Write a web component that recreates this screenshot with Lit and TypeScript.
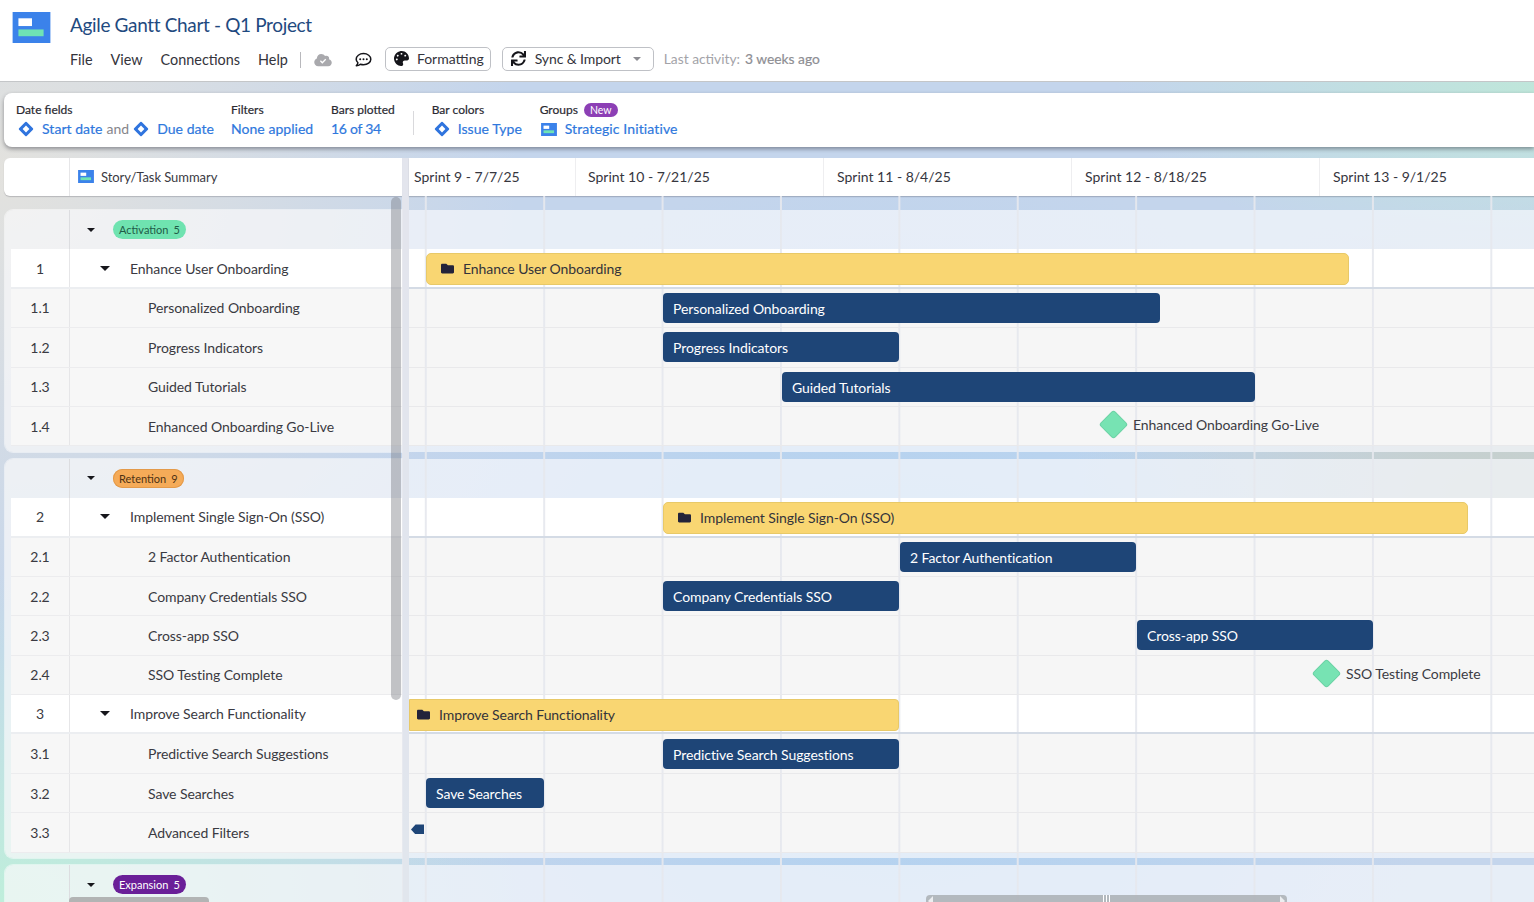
import { LitElement, html, css, svg } from "lit";
import { customElement } from "lit/decorators.js";

type Bar = { kind: "y" | "n" | "m" | "off"; x: number; w?: number; flat?: boolean };
type Row = { num: string; name: string; parent?: boolean; bar: Bar };
type Group = { label: string; count: number; cls: string; rows: Row[] };

const GROUPS: Group[] = [
  { label: "Activation", count: 5, cls: "mint", rows: [
    { num: "1", name: "Enhance User Onboarding", parent: true, bar: { kind: "y", x: 17, w: 923 } },
    { num: "1.1", name: "Personalized Onboarding", bar: { kind: "n", x: 254, w: 497 } },
    { num: "1.2", name: "Progress Indicators", bar: { kind: "n", x: 254, w: 236 } },
    { num: "1.3", name: "Guided Tutorials", bar: { kind: "n", x: 373, w: 473 } },
    { num: "1.4", name: "Enhanced Onboarding Go-Live", bar: { kind: "m", x: 691 } },
  ]},
  { label: "Retention", count: 9, cls: "orange", rows: [
    { num: "2", name: "Implement Single Sign-On (SSO)", parent: true, bar: { kind: "y", x: 254, w: 805 } },
    { num: "2.1", name: "2 Factor Authentication", bar: { kind: "n", x: 491, w: 236 } },
    { num: "2.2", name: "Company Credentials SSO", bar: { kind: "n", x: 254, w: 236 } },
    { num: "2.3", name: "Cross-app SSO", bar: { kind: "n", x: 728, w: 236 } },
    { num: "2.4", name: "SSO Testing Complete", bar: { kind: "m", x: 904 } },
    { num: "3", name: "Improve Search Functionality", parent: true, bar: { kind: "y", x: 0, w: 490, flat: true } },
    { num: "3.1", name: "Predictive Search Suggestions", bar: { kind: "n", x: 254, w: 236 } },
    { num: "3.2", name: "Save Searches", bar: { kind: "n", x: 17, w: 118 } },
    { num: "3.3", name: "Advanced Filters", bar: { kind: "off", x: 2 } },
  ]},
  { label: "Expansion", count: 5, cls: "purple", rows: [] },
];

const SPRINTS = ["Sprint 9 - 7/7/25", "Sprint 10 - 7/21/25", "Sprint 11 - 8/4/25", "Sprint 12 - 8/18/25", "Sprint 13 - 9/1/25"];

const logo = (w: number, h: number) => svg`<svg class="ic" width=${w} height=${h} viewBox="0 0 39 32"><rect width="39" height="32" fill="#3b82ea"/><rect x="6" y="6.5" width="14" height="8" fill="#fff"/><rect x="6" y="18" width="26" height="7" fill="#6fe3b4"/></svg>`;
const diamond = () => svg`<svg class="ic" width="16" height="16" viewBox="0 0 16 16"><rect x="2.6" y="2.6" width="10.8" height="10.8" rx="1" transform="rotate(45 8 8)" fill="#2f74de"/><rect x="5.6" y="5.6" width="4.8" height="4.8" transform="rotate(45 8 8)" fill="#fff"/></svg>`;
const folder = () => svg`<svg class="ic" width="13" height="13" viewBox="0 0 512 512"><path fill="#23233a" d="M464 128H272l-64-64H48C21.49 64 0 85.49 0 112v288c0 26.51 21.49 48 48 48h416c26.51 0 48-21.49 48-48V176c0-26.51-21.49-48-48-48z"/></svg>`;
const palette = () => svg`<svg class="ic" width="15" height="15" viewBox="0 0 512 512"><path fill="#15151a" d="M204.3 5C104.9 24.4 24.8 104.3 5.2 203.4c-37 187 131.7 326.4 258.8 306.7 41.2-6.4 61.4-54.6 42.5-91.7-23.1-45.4 9.9-98.4 60.9-98.4h79.7c35.8 0 64.8-29.6 64.9-65.3C511.5 97.1 368.1-26.9 204.3 5zM96 320c-17.7 0-32-14.3-32-32s14.3-32 32-32 32 14.3 32 32-14.3 32-32 32zm32-128c-17.7 0-32-14.3-32-32s14.3-32 32-32 32 14.3 32 32-14.3 32-32 32zm128-64c-17.7 0-32-14.3-32-32s14.3-32 32-32 32 14.3 32 32-14.3 32-32 32zm128 64c-17.7 0-32-14.3-32-32s14.3-32 32-32 32 14.3 32 32-14.3 32-32 32z"/></svg>`;
const sync = () => svg`<svg class="ic" width="15" height="15" viewBox="0 0 512 512"><path fill="#15151a" d="M440.65 12.57l4 82.77A247.16 247.16 0 0 0 255.83 8C134.73 8 33.91 94.92 12.29 209.82A12 12 0 0 0 24.09 224h49.05a12 12 0 0 0 11.67-9.26 175.91 175.91 0 0 1 317-56.94l-101.46-4.86a12 12 0 0 0-12.57 12v47.41a12 12 0 0 0 12 12H500a12 12 0 0 0 12-12V12a12 12 0 0 0-12-12h-47.37a12 12 0 0 0-11.98 12.57zM255.83 432a175.61 175.61 0 0 1-146-77.8l101.8 4.87a12 12 0 0 0 12.57-12v-47.4a12 12 0 0 0-12-12H12a12 12 0 0 0-12 12V500a12 12 0 0 0 12 12h47.35a12 12 0 0 0 12-12.6l-4.15-82.57A247.17 247.17 0 0 0 255.83 504c121.11 0 221.93-86.92 243.55-201.82a12 12 0 0 0-11.8-14.18h-49.05a12 12 0 0 0-11.67 9.26A175.86 175.86 0 0 1 255.83 432z"/></svg>`;
const cloud = () => svg`<svg class="ic" width="18" height="14" viewBox="0 0 640 512"><path fill="#a9a9ad" d="M537.6 226.6c4.1-10.7 6.4-22.4 6.4-34.6 0-53-43-96-96-96-19.7 0-38.1 6-53.3 16.2C367 64.2 315.3 32 256 32c-88.4 0-160 71.6-160 160 0 2.7.1 5.4.2 8.1C40.2 219.8 0 273.2 0 336c0 79.5 64.5 144 144 144h368c70.7 0 128-57.3 128-128 0-61.9-44-113.6-102.4-125.4z"/><path d="M225 285l70 70 125-125" fill="none" stroke="#fff" stroke-width="48"/></svg>`;
const chat = () => svg`<svg class="ic" width="17" height="16" viewBox="0 0 17 16"><path d="M8.5 1.6c-4.1 0-7.3 2.5-7.3 5.6 0 1.4.6 2.6 1.7 3.6-.2 1.1-.8 2-1.6 2.9 1.5-.1 2.9-.6 4-1.4 1 .3 2.1.5 3.2.5 4.1 0 7.3-2.5 7.3-5.6s-3.2-5.6-7.3-5.6z" fill="none" stroke="#15151a" stroke-width="1.5" stroke-linejoin="round"/><circle cx="5.2" cy="7.2" r="1" fill="#15151a"/><circle cx="8.5" cy="7.2" r="1" fill="#15151a"/><circle cx="11.8" cy="7.2" r="1" fill="#15151a"/></svg>`;

@customElement("app-root")
export class AppRoot extends LitElement {
  static styles = css`
    :host { display: block; width: 1534px; height: 902px; overflow: hidden; position: relative; font-family: Lato, "Open Sans", sans-serif; color: #3a3a42;
      background:
        radial-gradient(ellipse 520px 330px at 0 100%, #bfeedb 0%, rgba(191,238,219,0) 100%),
        radial-gradient(ellipse 420px 170px at 1534px 90px, #bfe6da 0%, rgba(191,230,218,0) 100%),
        radial-gradient(ellipse 430px 300px at 1500px 500px, #c6cfca 0%, rgba(198,207,202,0) 100%),
        radial-gradient(ellipse 520px 480px at 0 170px, #e3e2de 0%, rgba(227,226,222,0) 100%),
        radial-gradient(ellipse 560px 520px at 900px 680px, #aed1f1 0%, rgba(174,209,241,0) 100%),
        #c4d5ec;
    }
    .ic { display: block; flex: none; }
    header { background: #fff; border-bottom: 1px solid #c4c6c8; display: flex; gap: 19px; padding: 12px 0 0 12px; box-sizing: content-box; height: 69px; }
    .hmain { display: flex; flex-direction: column; }
    h1 { margin: 0; font-size: 19px; letter-spacing: -0.35px; font-weight: 400; line-height: 25px; color: #1f4a80; }
    .menu { display: flex; align-items: center; margin-top: 10px; height: 26px; font-size: 14.4px; color: #34343c; }
    .menu .m { margin: -2px 18px 0 0; }
    .vsep { width: 1px; height: 16px; background: #b8b8bc; margin: 0 13px 0 -6px; }
    .chat { margin: 0 13px 0 23px; }
    .btn { display: flex; align-items: center; height: 24px; box-sizing: border-box; border: 1px solid #bfc1c6; border-radius: 5px; padding: 0 6px 1px 8px; font-size: 14px; margin: -2px 11px 0 0; }
    .btn .ic { margin-right: 8px; }
    .btn.sync { letter-spacing: -0.1px; margin-right: 10px; }
    .btn.sync .ic { margin-right: 9px; }
    .btn .tri { width: 0; height: 0; border: 4px solid transparent; border-top: 4.5px solid #8c8c92; border-bottom: 0; margin-left: 12px; margin-right: 6px; }
    .last { font-size: 13.8px; color: #a3a3a8; margin-top: -3px; }
    .last b { font-weight: 400; margin-left: 5px; color: #8e8e93; -webkit-text-stroke: 0.2px #8e8e93; }

    .tools { margin: 11px 0 11px 4px; height: 54px; background: #fff; border-radius: 8px 0 0 8px; box-shadow: 0 2px 4px rgba(40,40,50,.45); display: flex; padding: 9px 0 0 12px; box-sizing: border-box; }
    .tg { display: flex; flex-direction: column; }
    .tl { font-size: 12px; line-height: 16px; color: #2a2a32; display: flex; align-items: center; gap: 6px; -webkit-text-stroke: 0.2px #2a2a32; }
    .tv { font-size: 14px; line-height: 20px; margin-top: 1px; color: #2f78dd; display: flex; align-items: center; letter-spacing: 0.04px; -webkit-text-stroke: 0.2px #2f78dd; }
    .tv .g { color: #85858b; -webkit-text-stroke: 0; margin: 0 2px 0 4px; }
    .tv .ic { margin: 0 8px 0 2px; }
    .tv.si { margin-left: -1px; letter-spacing: 0.12px; }
    .tv.cnt { letter-spacing: -0.28px; }
    .new { background: #8c3fb5; color: #fff; font-size: 10.5px; line-height: 14px; padding: 0 6px; border-radius: 8px; -webkit-text-stroke: 0; }
    .tsep { width: 1px; height: 24px; background: #d9d9dc; margin: 9px 18px 0 18px; }
    .w215 { width: 215px; }
    .w100 { width: 100px; }
    .w108 { width: 108px; }

    .main { display: flex; height: 744px; margin-left: 4px; position: relative; }
    .left { width: 398px; flex: none; }
    .split { width: 7px; flex: none; background: rgba(232,233,238,.8); }
    .gantt { flex: 1; min-width: 0; }
    .lhead { height: 38px; background: #fff; border-radius: 6px 0 0 6px; display: flex; box-shadow: 0 1px 1px rgba(60,60,70,.25); margin-bottom: 14px; }
    .lhead .n { width: 65px; border-right: 1px solid #e6e6e8; flex: none; }
    .lhead .t { display: flex; align-items: center; gap: 7px; padding: 0 0 1px 8px; font-size: 13px; letter-spacing: -0.05px; }
    .lgroup { margin-bottom: 7px; margin-left: 1px; background: rgba(248,248,250,.72); border-radius: 8px 0 0 8px; padding-bottom: 5.4px; box-shadow: 0 0 0 1px rgba(255,255,255,.5); }
    .lgh { height: 39.4px; display: flex; }
    .lgh .n { width: 64px; flex: none; border-right: 1px solid #dcdde0; }
    .lgh .t { display: flex; align-items: center; padding-left: 17px; }
    .caret { width: 0; height: 0; border: 4px solid transparent; border-top: 4.5px solid #17171c; border-bottom: 0; flex: none; }
    .caret.big { border-width: 5px; border-bottom: 0; }
    .pill { margin-left: 18px; height: 19px; padding: 0 6px; border-radius: 10px; font-size: 11px; line-height: 19px; display: flex; gap: 5px; }
    .mint { background: #6fe3b0; color: #1f5a47; }
    .orange { background: #f5ab58; color: #4e3214; box-shadow: inset 0 0 0 1px #e39a4a; }
    .purple { background: #6a1f98; color: #fff; }
    .lrow { height: 39.4px; box-sizing: border-box; margin-left: 6px; display: flex; align-items: center; font-size: 14px; letter-spacing: -0.08px; background: #f7f7f7; border-bottom: 1px solid #ececee; }
    .lrow.p { background: #fff; border-bottom: 2px solid #eceef1; }
    .lrow .n { width: 58px; flex: none; text-align: center; align-self: stretch; display: flex; align-items: center; justify-content: center; border-right: 1px solid #e6e6e8; }
    .lrow .nm { padding-left: 78px; }
    .lrow.p .nm { padding-left: 20px; }
    .lrow .caret { margin-left: 30px; }

    .ghead { height: 38px; background: #fff; display: flex; font-size: 14px; color: #36363e; box-shadow: 0 1px 1px rgba(60,60,70,.25); }
    .sp { display: flex; align-items: center; box-sizing: border-box; width: 248px; padding: 0 0 2px 13px; border-right: 1px solid #eeeef0; flex: none; }
    .sp:first-child { width: 167px; padding-left: 5px; }
    .sp:nth-child(2) { padding-left: 12px; }
    .sp:last-child { border-right: 0; }
    .lines { background-image: linear-gradient(90deg, rgba(230,232,238,.92) 1.5px, transparent 1.5px); background-size: 118.4px 100%; background-position: 15.8px 0; }
    .gtop { height: 14px; }
    .gband { height: 7px; }
    .gg { background-color: rgba(246,248,252,.7); }
    .gghead { height: 39.4px; }
    .gpad { height: 5.4px; }
    .grow { height: 39.4px; box-sizing: border-box; display: flex; align-items: center; background-color: #f6f6f6; border-bottom: 1px solid #e9e9eb; font-size: 14px; letter-spacing: -0.08px; }
    .grow.p { background-color: #fff; border-bottom: 2px solid #d4dbe5; padding-top: 2px; }
    .bar { box-sizing: border-box; height: 30px; border-radius: 4px; display: flex; align-items: center; flex: none; }
    .bar.n { background: #1e4577; color: #fff; padding: 1px 0 0 10px; }
    .bar.y { height: 32px; background: #f9d672; border: 1px solid #e8c968; color: #33333a; padding: 0 0 1px 14px; gap: 9px; border-radius: 5px; }
    .bar.flat { border-radius: 0 4px 4px 0; padding-left: 7px; }
    .ms { display: flex; align-items: center; gap: 6px; margin-top: -3px; color: #3c3c44; }
    .dia { width: 19px; height: 19px; margin: 0 4px; background: #77e3b3; transform: rotate(45deg); border-radius: 2px; box-shadow: 0 0 0 1px #6cd2a5; flex: none; }
    .off { width: 13px; height: 10px; background: #1e4577; clip-path: polygon(35% 0, 100% 0, 100% 100%, 35% 100%, 0 50%); margin-top: -6px; flex: none; }

    .vthumb { position: absolute; left: 387px; top: 39px; width: 10px; height: 503px; background: rgba(120,122,128,.42); border-radius: 5px; }
    .hthumb { position: absolute; left: 65px; top: 739px; width: 140px; height: 6px; background: #b2b4b4; border-radius: 4px 4px 0 0; }
    .gthumb { position: absolute; left: 922px; top: 737px; width: 361px; height: 8px; background: rgba(170,175,180,.85); border-radius: 4px 4px 0 0; display: flex; justify-content: center; gap: 2px; }
    .gthumb i { width: 1px; height: 7px; background: #fff; }
    .gthumb .a { position: absolute; top: 1px; width: 0; height: 0; border: 5px solid transparent; }
    .gthumb .al { left: 2px; border-right-color: #eceef0; border-left: 0; }
    .gthumb .ar { right: 2px; border-left-color: #eceef0; border-right: 0; }
  `;

  private renderBar(b: Bar, name: string) {
    const ml = `margin-left:${b.x}px`;
    if (b.kind === "off") return html`<div class="off" style=${ml}></div>`;
    if (b.kind === "m") return html`<div class="ms" style=${ml}><div class="dia"></div><span>${name}</span></div>`;
    const st = `${ml};width:${b.w}px`;
    if (b.kind === "y") return html`<div class="bar y ${b.flat ? "flat" : ""}" style=${st}>${folder()}<span>${name}</span></div>`;
    return html`<div class="bar n" style=${st}>${name}</div>`;
  }

  render() {
    return html`
      <header>
        ${logo(39, 31)}
        <div class="hmain">
          <h1>Agile Gantt Chart - Q1 Project</h1>
          <div class="menu">
            <span class="m">File</span><span class="m">View</span><span class="m">Connections</span><span class="m">Help</span>
            <div class="vsep"></div>${cloud()}<span class="chat">${chat()}</span>
            <div class="btn">${palette()}Formatting</div>
            <div class="btn sync">${sync()}Sync &amp; Import<span class="tri"></span></div>
            <div class="last">Last activity:<b>3 weeks ago</b></div>
          </div>
        </div>
      </header>
      <section class="tools">
        <div class="tg w215"><div class="tl">Date fields</div><div class="tv">${diamond()}Start date<span class="g">and</span>${diamond()}Due date</div></div>
        <div class="tg w100"><div class="tl">Filters</div><div class="tv">None applied</div></div>
        <div class="tg"><div class="tl">Bars plotted</div><div class="tv cnt">16 of 34</div></div>
        <div class="tsep"></div>
        <div class="tg w108"><div class="tl">Bar colors</div><div class="tv">${diamond()}Issue Type</div></div>
        <div class="tg"><div class="tl">Groups <span class="new">New</span></div><div class="tv si">${logo(16, 13)}Strategic Initiative</div></div>
      </section>
      <div class="main">
        <div class="left">
          <div class="lhead"><div class="n"></div><div class="t">${logo(16, 13)}Story/Task Summary</div></div>
          ${GROUPS.map(g => html`
            <div class="lgroup">
              <div class="lgh"><div class="n"></div><div class="t"><span class="caret"></span><span class="pill ${g.cls}"><span>${g.label}</span><span>${g.count}</span></span></div></div>
              ${g.rows.map(r => html`
                <div class="lrow ${r.parent ? "p" : ""}"><div class="n">${r.num}</div>${r.parent ? html`<span class="caret big"></span>` : ""}<span class="nm">${r.name}</span></div>
              `)}
            </div>
          `)}
        </div>
        <div class="split"></div>
        <div class="gantt">
          <div class="ghead">${SPRINTS.map(s => html`<div class="sp">${s}</div>`)}</div>
          <div class="gtop lines"></div>
          ${GROUPS.map(g => html`
            <div class="gg">
              <div class="gghead lines"></div>
              ${g.rows.map(r => html`<div class="grow lines ${r.parent ? "p" : ""}">${this.renderBar(r.bar, r.name)}</div>`)}
              <div class="gpad lines"></div>
            </div>
            <div class="gband lines"></div>
          `)}
        </div>
        <div class="vthumb"></div>
        <div class="hthumb"></div>
        <div class="gthumb"><span class="a al"></span><i></i><i></i><i></i><span class="a ar"></span></div>
      </div>
    `;
  }
}
